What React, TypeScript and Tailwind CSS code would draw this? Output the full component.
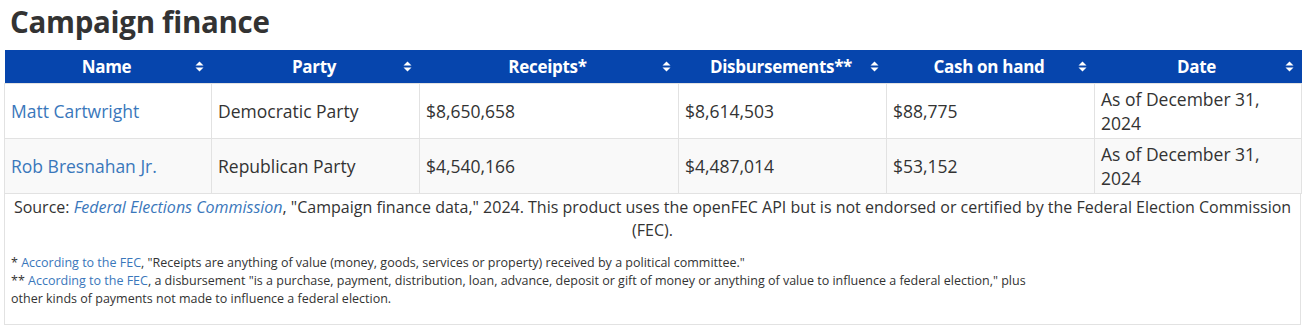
import React from 'react';

const rows = [
    { name: 'Matt Cartwright', party: 'Democratic Party', receipts: '$8,650,658', disbursements: '$8,614,503', cash: '$88,775', date: 'As of December 31, 2024' },
    { name: 'Rob Bresnahan Jr.', party: 'Republican Party', receipts: '$4,540,166', disbursements: '$4,487,014', cash: '$53,152', date: 'As of December 31, 2024' },
];

const columns = [
    { label: 'Name', width: 'w-[207px]' },
    { label: 'Party', width: 'w-[208px]' },
    { label: 'Receipts*', width: 'w-[259px]' },
    { label: 'Disbursements**', width: 'w-[208px]' },
    { label: 'Cash on hand', width: 'w-[208px]' },
    { label: 'Date', width: 'w-[207px]' },
];

const SortIcon = () => (
    <svg width="9" height="11" viewBox="0 0 9 11" className="shrink-0">
        <path d="M4.5 0.5 L8.5 4.5 H0.5 Z" fill="white" />
        <path d="M4.5 10.5 L8.5 6.5 H0.5 Z" fill="white" />
    </svg>
);

const App: React.FC = () => {
    return (
        <div className="bg-white w-[1310px] h-[336px] px-[4px] text-[#333]" style={{ fontFamily: '"Open Sans", "Liberation Sans", sans-serif' }}>
            <h2 className="text-[29.5px] font-bold leading-[44px] pl-[6px] text-[#333] tracking-[-0.3px]">Campaign finance</h2>
            <div className="mt-[6px] w-[1297px]">
                <table className="border-collapse table-fixed w-full">
                    <thead>
                        <tr className="bg-[#0645ad] h-[33px]">
                            {columns.map((c) => (
                                <th key={c.label} className={`${c.width} p-0`}>
                                    <div className="flex items-center pl-[14px] pr-[8px]">
                                        <span className="flex-1 text-center text-white font-bold text-[17px] tracking-[-0.3px]">{c.label}</span>
                                        <SortIcon />
                                    </div>
                                </th>
                            ))}
                        </tr>
                    </thead>
                    <tbody>
                        {rows.map((r, i) => (
                            <tr key={r.name} className={i % 2 === 1 ? 'bg-[#f9f9f9]' : 'bg-white'}>
                                <td className="border border-[#e2e2e2] px-[6px] py-[3px] h-[55px] text-[17.5px] leading-[24px]">
                                    <a className="text-[#3a77bb]">{r.name}</a>
                                </td>
                                <td className="border border-[#e2e2e2] px-[6px] py-[3px] text-[17.5px] leading-[24px]">{r.party}</td>
                                <td className="border border-[#e2e2e2] px-[6px] py-[3px] text-[17.5px] leading-[24px]">{r.receipts}</td>
                                <td className="border border-[#e2e2e2] px-[6px] py-[3px] text-[17.5px] leading-[24px]">{r.disbursements}</td>
                                <td className="border border-[#e2e2e2] px-[6px] py-[3px] text-[17.5px] leading-[24px]">{r.cash}</td>
                                <td className="border border-[#e2e2e2] px-[6px] py-[3px] text-[17.5px] leading-[24px]">{r.date}</td>
                            </tr>
                        ))}
                    </tbody>
                </table>
                <div className="border border-t-0 border-[#e2e2e2] pt-[2px] pb-[16px] px-[6px]">
                    <p className="text-center text-[16px] leading-[23px]">
                        Source: <a className="italic text-[#3a77bb]">Federal Elections Commission</a>, "Campaign finance data," 2024. This product uses the openFEC API but is not endorsed or certified by the Federal Election Commission (FEC).
                    </p>
                    <div className="mt-[12px] w-[1015px] text-[12.5px] leading-[18px]">
                        <p>* <a className="text-[#3a77bb]">According to the FEC</a>, "Receipts are anything of value (money, goods, services or property) received by a political committee."</p>
                        <p>** <a className="text-[#3a77bb]">According to the FEC</a>, a disbursement "is a purchase, payment, distribution, loan, advance, deposit or gift of money or anything of value to influence a federal election," plus other kinds of payments not made to influence a federal election.</p>
                    </div>
                </div>
            </div>
        </div>
    );
};

export default App;
